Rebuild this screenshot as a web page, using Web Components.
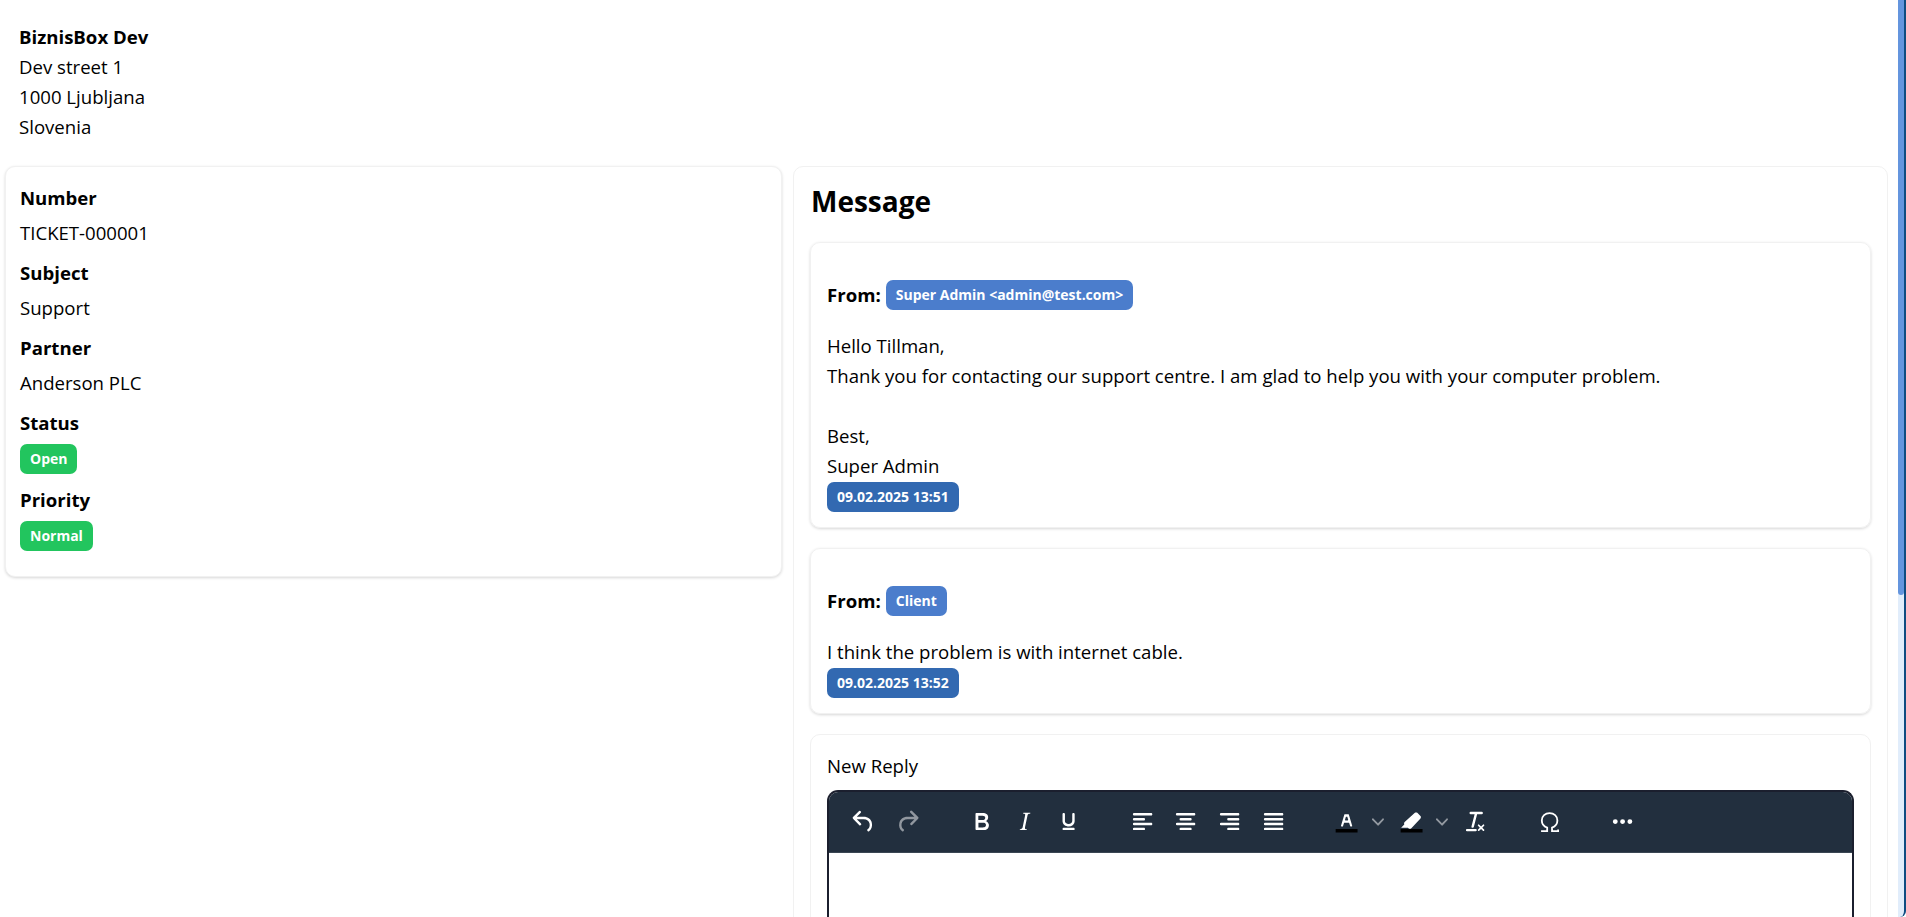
<!DOCTYPE html>
<html lang="en">
<head>
<meta charset="utf-8">
<title>TICKET-000001</title>
<style>
  html, body { margin: 0; height: 917px; overflow: hidden; background: #fff; }
  body { font: 18.6px/30px "Open Sans", "Liberation Sans", sans-serif; color: #000; }
</style>
</head>
<body>
<ticket-page>
  <company-address slot="header" name="BiznisBox Dev">
    <div>Dev street 1</div>
    <div>1000 Ljubljana</div>
    <div>Slovenia</div>
  </company-address>

  <ui-card slot="left" class="info">
    <info-field label="Number">TICKET-000001</info-field>
    <info-field label="Subject">Support</info-field>
    <info-field label="Partner">Anderson PLC</info-field>
    <info-field label="Status" badge><ui-badge color="#22c55e">Open</ui-badge></info-field>
    <info-field label="Priority" badge><ui-badge color="#22c55e">Normal</ui-badge></info-field>
  </ui-card>

  <message-panel slot="right" heading="Message">
    <message-item from="Super Admin &lt;admin@test.com&gt;" time="09.02.2025 13:51">
      <div>Hello Tillman,</div>
      <div>Thank you for contacting our support centre. I am glad to help you with your computer problem.</div>
      <div><br></div>
      <div>Best,</div>
      <div>Super Admin</div>
    </message-item>
    <message-item from="Client" time="09.02.2025 13:52">
      <div>I think the problem is with internet cable.</div>
    </message-item>
    <reply-editor label="New Reply"></reply-editor>
  </message-panel>
</ticket-page>
<window-scrollbar></window-scrollbar>

<script>
class TicketPage extends HTMLElement {
  constructor() {
    super();
    this.attachShadow({ mode: 'open' }).innerHTML = `
      <style>
        :host { display: block; padding: 22px 18px 0 5px; }
        .columns {
          display: grid;
          grid-template-columns: 777px minmax(0, 1fr);
          gap: 11px;
          align-items: start;
          margin-top: 24px;
        }
      </style>
      <slot name="header"></slot>
      <div class="columns">
        <slot name="left"></slot>
        <slot name="right"></slot>
      </div>`;
  }
}

class CompanyAddress extends HTMLElement {
  constructor() {
    super();
    this.attachShadow({ mode: 'open' }).innerHTML = `
      <style>
        :host { display: block; padding-left: 14px; }
        b { display: block; font-weight: 700; }
      </style>
      <b>${this.getAttribute('name')}</b>
      <slot></slot>`;
  }
}

class UiCard extends HTMLElement {
  constructor() {
    super();
    this.attachShadow({ mode: 'open' }).innerHTML = `
      <style>
        :host {
          display: block;
          box-sizing: border-box;
          height: 411px;
          padding: 16px 14px 0;
          border: 1px solid #f1f1f1;
          border-radius: 10px;
          box-shadow: 0 1px 3px rgba(0, 0, 0, 0.16);
          background: #fff;
        }
      </style>
      <slot></slot>`;
  }
}

class InfoField extends HTMLElement {
  constructor() {
    super();
    this.attachShadow({ mode: 'open' }).innerHTML = `
      <style>
        :host { display: block; margin-bottom: 10px; }
        :host([badge]) { margin-bottom: 11px; }
        b { display: block; font-weight: 700; margin-bottom: 5px; }
        :host([badge]) b { margin-bottom: 6px; }
        .value { display: flex; }
      </style>
      <b>${this.getAttribute('label')}</b>
      <div class="value"><slot></slot></div>`;
  }
}

class UiBadge extends HTMLElement {
  constructor() {
    super();
    this.attachShadow({ mode: 'open' }).innerHTML = `
      <style>
        :host {
          display: inline-flex;
          align-items: center;
          height: 30px;
          padding: 0 10px;
          border-radius: 7px;
          background: ${this.getAttribute('color')};
          color: #fff;
          font-size: 14px;
          font-weight: 700;
          line-height: 30px;
          white-space: nowrap;
        }
      </style>
      <slot></slot>`;
  }
}

class MessagePanel extends HTMLElement {
  constructor() {
    super();
    this.attachShadow({ mode: 'open' }).innerHTML = `
      <style>
        :host {
          display: block;
          box-sizing: border-box;
          height: 900px;
          padding: 12px 16px 0;
          border: 1px solid #f1f1f1;
          border-radius: 10px;
        }
        h2 { margin: 0 0 19px; font-size: 28px; line-height: 44px; font-weight: 700; padding-left: 1px; }
        .list { display: flex; flex-direction: column; gap: 20px; }
      </style>
      <h2>${this.getAttribute('heading')}</h2>
      <div class="list"><slot></slot></div>`;
  }
}

class MessageItem extends HTMLElement {
  constructor() {
    super();
    const from = this.getAttribute('from').replace(/</g, '&lt;').replace(/>/g, '&gt;');
    this.attachShadow({ mode: 'open' }).innerHTML = `
      <style>
        :host {
          display: block;
          box-sizing: border-box;
          padding: 37px 16px 15px;
          border: 1px solid #f1f1f1;
          border-radius: 10px;
          box-shadow: 0 1px 3px rgba(0, 0, 0, 0.16);
        }
        .from { display: flex; align-items: center; gap: 5px; margin-bottom: 21px; font-weight: 700; }
        .time { display: flex; margin-top: 1px; }
      </style>
      <div class="from"><span>From:</span><ui-badge color="#4b7dcc">${from}</ui-badge></div>
      <slot></slot>
      <div class="time"><ui-badge color="#3269b1">${this.getAttribute('time')}</ui-badge></div>`;
  }
}

const ICONS = {
  undo: 'M6.4 8H12c3.7 0 6.2 2 6.8 5.1.6 2.7-.4 5.6-2.3 6.8a1 1 0 0 1-1-1.8c1.1-.6 1.8-2.7 1.4-4.6-.5-2.1-2.1-3.5-4.9-3.5H6.4l3.3 3.3a1 1 0 1 1-1.4 1.4l-5-5a1 1 0 0 1 0-1.4l5-5a1 1 0 0 1 1.4 1.4L6.4 8Z',
  redo: 'M17.6 10H12c-2.8 0-4.4 1.4-4.9 3.5-.4 2 .3 4 1.4 4.6a1 1 0 1 1-1 1.8c-2-1.2-2.9-4.1-2.3-6.8.6-3 3-5.1 6.8-5.1h5.6l-3.3-3.3a1 1 0 1 1 1.4-1.4l5 5a1 1 0 0 1 0 1.4l-5 5a1 1 0 0 1-1.4-1.4l3.3-3.3Z',
  bold: 'M7.8 19c-.3 0-.5 0-.6-.2l-.2-.5V5.7c0-.2 0-.4.2-.5l.6-.2h5c1.5 0 2.7.3 3.5 1 .7.6 1.1 1.4 1.1 2.5a3 3 0 0 1-.6 1.9c-.4.6-1 1-1.6 1.2.4.1.9.3 1.3.6s.8.7 1 1.2c.4.4.5 1 .5 1.6 0 1.3-.4 2.3-1.3 3-.8.7-2.1 1-3.8 1H7.8Zm5-8.3c.6 0 1.2-.1 1.6-.5.4-.3.6-.7.6-1.3 0-1.1-.8-1.7-2.3-1.7H9.3v3.5h3.4Zm.5 6c.7 0 1.3-.1 1.7-.4.4-.4.6-.9.6-1.5s-.2-1-.7-1.4c-.4-.3-1-.4-2-.4H9.4v3.8h4Z',
  italic: 'm16.7 4.7-.1.9h-.3c-.6 0-1 0-1.4.3-.3.3-.4.6-.5 1.1l-2.1 9.8v.6c0 .5.4.8 1.4.8h.2l-.2.8H8l.2-.8h.2c1.1 0 1.8-.5 2-1.5l2-9.8.1-.5c0-.6-.4-.8-1.4-.8h-.3l.2-.9h5.8Z',
  underline: 'M16 5c.6 0 1 .4 1 1v5.5a4 4 0 0 1-.4 1.8l-1 1.4a5.3 5.3 0 0 1-5.5 1 5 5 0 0 1-1.6-1c-.5-.4-.8-.9-1.1-1.4a4 4 0 0 1-.4-1.8V6c0-.6.4-1 1-1s1 .4 1 1v5.5c0 .3 0 .6.2 1l.6.7a3.3 3.3 0 0 0 2.2.8 3.4 3.4 0 0 0 2.2-.8c.3-.2.4-.5.6-.8l.2-.9V6c0-.6.4-1 1-1ZM8 17h8c.6 0 1 .4 1 1s-.4 1-1 1H8a1 1 0 0 1 0-2Z',
  left: 'M5 5h14c.6 0 1 .4 1 1s-.4 1-1 1H5a1 1 0 1 1 0-2Zm0 4h8c.6 0 1 .4 1 1s-.4 1-1 1H5a1 1 0 1 1 0-2Zm0 8h8c.6 0 1 .4 1 1s-.4 1-1 1H5a1 1 0 0 1 0-2Zm0-4h14c.6 0 1 .4 1 1s-.4 1-1 1H5a1 1 0 0 1 0-2Z',
  center: 'M5 5h14c.6 0 1 .4 1 1s-.4 1-1 1H5a1 1 0 1 1 0-2Zm3 4h8c.6 0 1 .4 1 1s-.4 1-1 1H8a1 1 0 1 1 0-2Zm0 8h8c.6 0 1 .4 1 1s-.4 1-1 1H8a1 1 0 0 1 0-2Zm-3-4h14c.6 0 1 .4 1 1s-.4 1-1 1H5a1 1 0 0 1 0-2Z',
  right: 'M5 5h14c.6 0 1 .4 1 1s-.4 1-1 1H5a1 1 0 1 1 0-2Zm6 4h8c.6 0 1 .4 1 1s-.4 1-1 1h-8a1 1 0 0 1 0-2Zm0 8h8c.6 0 1 .4 1 1s-.4 1-1 1h-8a1 1 0 0 1 0-2Zm-6-4h14c.6 0 1 .4 1 1s-.4 1-1 1H5a1 1 0 0 1 0-2Z',
  justify: 'M5 5h14c.6 0 1 .4 1 1s-.4 1-1 1H5a1 1 0 1 1 0-2Zm0 4h14c.6 0 1 .4 1 1s-.4 1-1 1H5a1 1 0 1 1 0-2Zm0 4h14c.6 0 1 .4 1 1s-.4 1-1 1H5a1 1 0 0 1 0-2Zm0 4h14c.6 0 1 .4 1 1s-.4 1-1 1H5a1 1 0 0 1 0-2Z',
  textcolor: 'M8.7 16h-.8a.5.5 0 0 1-.5-.6l2.7-9c.1-.3.3-.4.5-.4h2.8c.2 0 .4.1.5.4l2.7 9a.5.5 0 0 1-.5.6h-.8a.5.5 0 0 1-.4-.4l-.7-2.2c0-.3-.3-.4-.5-.4h-3.4c-.2 0-.4.1-.5.4l-.7 2.2c0 .3-.2.4-.4.4Zm2.6-7.6-.6 2a.5.5 0 0 0 .5.6h1.6a.5.5 0 0 0 .5-.6l-.6-2c0-.3-.3-.4-.5-.4h-.4c-.2 0-.4.1-.5.4Z',
  highlight: 'M3.4 17 6 14.3c-.3-.7-.2-1.4.3-1.9l8.4-7.6c.6-.5 1.4-.5 2 0l2.6 2.6c.5.6.5 1.4 0 2l-7.5 8c-.5.5-1.2.6-1.9.4L9 17H3.4Z',
  clear: 'M13.2 6a1 1 0 0 1 0 .2l-2.6 10a1 1 0 0 1-1 .8h-.2a.8.8 0 0 1-.8-1l2.6-10H8a1 1 0 1 1 0-2h9a1 1 0 0 1 0 2h-3.8ZM5 18h7a1 1 0 0 1 0 2H5a1 1 0 0 1 0-2Zm13 1.5L16.5 18 15 19.5a.7.7 0 0 1-1-1l1.5-1.5-1.5-1.5a.7.7 0 0 1 1-1l1.5 1.5 1.5-1.5a.7.7 0 0 1 1 1L17.5 17l1.5 1.5a.7.7 0 0 1-1 1Z',
  omega: 'M5 19.8h5v-2.9C7.6 16 5.6 13.8 5.6 11 5.6 7.4 8.4 5 12 5s6.400 2.400 6.400 6c0 2.800-2 5-4.400 5.900v2.900h5v-1.300',
  more: 'M6 10a2 2 0 0 0-2 2c0 1.100.900 2 2 2a2 2 0 0 0 2-2 2 2 0 0 0-2-2Zm12 0a2 2 0 0 0-2 2c0 1.100.900 2 2 2a2 2 0 0 0 2-2 2 2 0 0 0-2-2Zm-6 0a2 2 0 0 0-2 2c0 1.100.900 2 2 2a2 2 0 0 0 2-2 2 2 0 0 0-2-2Z'
};

class TbButton extends HTMLElement {
  constructor() {
    super();
    const name = this.getAttribute('icon');
    const swatch = this.hasAttribute('swatch') ? '<path fill="#000" d="M3 18h18v3H3z"/>' : '';
    const glyph = name === 'omega'
      ? `<path fill="none" stroke="currentColor" stroke-width="1.500" d="${ICONS[name]}"/>`
      : `<path fill="currentColor" d="${ICONS[name]}"/>`;
    const chevron = this.hasAttribute('split')
      ? `<span class="chev"><svg viewBox="0 0 10 10" width="12" height="12"><path fill="currentColor" d="M8.700 2.200c.3-.3.800-.3 1 0 .4.400.4.900 0 1.200L5.700 7.800c-.3.3-.9.3-1.200 0L.2 3.400a.8.800 0 0 1 0-1.200c.3-.3.800-.3 1.100 0L5 6l3.700-3.800Z"/></svg></span>`
      : '';
    this.attachShadow({ mode: 'open' }).innerHTML = `
      <style>
        :host { display: flex; height: 41.3px; margin: 0 1.2px; color: #fff; }
        :host([disabled]) { color: rgba(255, 255, 255, 0.5); }
        .btn { display: flex; align-items: center; justify-content: center; width: 41.300px; }
        .chev { display: flex; align-items: center; justify-content: center; width: 20.700px; color: rgba(255, 255, 255, 0.5); }
      </style>
      <span class="btn"><svg viewBox="0 0 24 24" width="29.200" height="29.200">${glyph}${swatch}</svg></span>${chevron}`;
  }
}

class TbGroup extends HTMLElement {
  constructor() {
    super();
    this.attachShadow({ mode: 'open' }).innerHTML = `
      <style>
        :host { display: flex; padding: 0 15px; }
        :host(:first-child) { padding-left: 13px; }
      </style>
      <slot></slot>`;
  }
}

class ReplyEditor extends HTMLElement {
  constructor() {
    super();
    this.attachShadow({ mode: 'open' }).innerHTML = `
      <style>
        :host { display: block; box-sizing: border-box; padding: 16px 16px 0; height: 400px; border: 1px solid #f1f1f1; border-radius: 10px; }
        .label { margin-bottom: 9px; }
        .editor { height: 340px; border: 2px solid #1b1f2e; border-bottom: 0; border-radius: 11px 11px 0 0; overflow: hidden; background: #fff; }
        .toolbar { display: flex; align-items: center; height: 60px; background: #222f3e; border-bottom: 1px solid #3a4653; }
      </style>
      <div class="label">${this.getAttribute('label')}</div>
      <div class="editor">
        <div class="toolbar">
          <tb-group><tb-button icon="undo"></tb-button><tb-button icon="redo" disabled></tb-button></tb-group>
          <tb-group><tb-button icon="bold"></tb-button><tb-button icon="italic"></tb-button><tb-button icon="underline"></tb-button></tb-group>
          <tb-group><tb-button icon="left"></tb-button><tb-button icon="center"></tb-button><tb-button icon="right"></tb-button><tb-button icon="justify"></tb-button></tb-group>
          <tb-group><tb-button icon="textcolor" swatch split></tb-button><tb-button icon="highlight" swatch split></tb-button><tb-button icon="clear"></tb-button></tb-group>
          <tb-group><tb-button icon="omega"></tb-button></tb-group>
          <tb-group><tb-button icon="more"></tb-button></tb-group>
        </div>
      </div>`;
  }
}

// window edge: thumb and track sit over the page
class WindowScrollbar extends HTMLElement {
  constructor() {
    super();
    this.attachShadow({ mode: 'open' }).innerHTML = `
      <style>
        :host {
          position: fixed;
          top: 0;
          right: 0;
          bottom: 0;
          width: 6px;
          border-right: 2px solid #0f4c81;
          border-radius: 0 0 6px 0;
          background: #e1edfb;
        }
        .thumb { height: 595px; border-radius: 0 0 3px 3px; background: #6495de; }
      </style>
      <div class="thumb"></div>`;
  }
}

customElements.define('ticket-page', TicketPage);
customElements.define('company-address', CompanyAddress);
customElements.define('ui-card', UiCard);
customElements.define('info-field', InfoField);
customElements.define('ui-badge', UiBadge);
customElements.define('message-panel', MessagePanel);
customElements.define('message-item', MessageItem);
customElements.define('tb-button', TbButton);
customElements.define('tb-group', TbGroup);
customElements.define('reply-editor', ReplyEditor);
customElements.define('window-scrollbar', WindowScrollbar);
</script>
</body>
</html>
